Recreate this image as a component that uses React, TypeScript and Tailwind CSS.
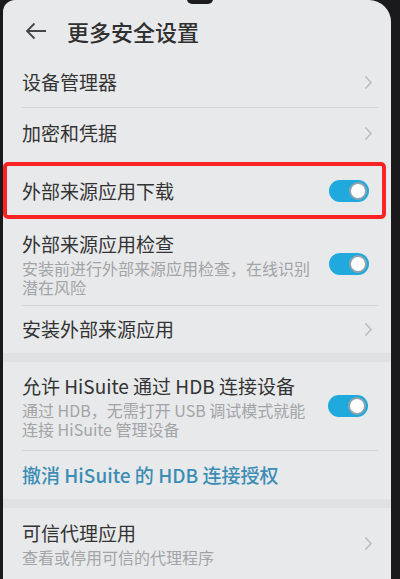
import { ReactNode } from "react";

const font = { fontFamily: '"Noto Sans CJK SC", "Noto Sans", sans-serif' };

function Chevron() {
    return (
        <svg width="9" height="15" viewBox="0 0 9 15" className="shrink-0">
            <path d="M1.5 1.5 L7 7.5 L1.5 13.5" fill="none" stroke="#b9bbbd" strokeWidth="1.5" />
        </svg>
    );
}

function Toggle() {
    return (
        <div className="flex h-[22px] w-[40px] shrink-0 items-center justify-end rounded-full bg-[#1fa9dd] pr-[2px]">
            <div className="h-[18px] w-[18px] rounded-full border-2 border-[#8fa3ad] bg-white" />
        </div>
    );
}

function Divider() {
    return <div className="ml-[19px] mr-[13px] h-px bg-[#d3d4d6]" />;
}

function Band() {
    return <div className="h-[9px] bg-[#e0e1e3]" />;
}

function Row({
    title,
    sub = [],
    right,
    className,
    titleClass = "text-[#333333]",
}: {
    title: string;
    sub?: string[];
    right?: ReactNode;
    className?: string;
    titleClass?: string;
}) {
    return (
        <div className={`flex items-center gap-3 pl-[19px] pr-[18px] ${className ?? ""}`}>
            <div className="flex min-w-0 flex-1 flex-col">
                <span className={`whitespace-nowrap text-[19px] leading-[26px] ${titleClass}`}>{title}</span>
                {sub.length > 0 && (
                    <div className="mt-[2px] flex flex-col">
                        {sub.map((line) => (
                            <span key={line} className="whitespace-nowrap text-[16px] leading-[19px] text-[#a3a4a6]">
                                {line}
                            </span>
                        ))}
                    </div>
                )}
            </div>
            {right}
        </div>
    );
}

export default function App() {
    return (
        <div className="flex h-[579px] w-[400px] overflow-hidden bg-[#1a1a1c]" style={font}>
            <div className="w-[3px] shrink-0" />
            <div className="relative flex flex-1 flex-col overflow-hidden rounded-tl-[12px] rounded-tr-[22px] bg-[#e8e9eb]">
                <div className="absolute left-[184px] top-[-6px] h-[10px] w-[26px] rounded-full bg-[#1b1b1d]" />

                <div className="flex h-[58px] items-center gap-[20px] pl-[22px] pt-[4px]">
                    <svg width="22" height="18" viewBox="0 0 22 18">
                        <path d="M21 9 H2 M9.5 1.5 L2 9 L9.5 16.5" fill="none" stroke="#454545" strokeWidth="1.8" />
                    </svg>
                    <span className="text-[22px] font-medium leading-none text-[#303030]">更多安全设置</span>
                </div>

                <Row title="设备管理器" right={<Chevron />} className="h-[50px]" />
                <Divider />
                <Row title="加密和凭据" right={<Chevron />} className="h-[51px]" />

                <div className="relative">
                    <Row title="外部来源应用下载" right={<Toggle />} className="h-[64px] pr-[22px]" />
                    <div className="absolute bottom-[4px] left-0 right-[5px] top-[3px] rounded-[5px] border-4 border-[#fb2323]" />
                </div>

                <Row
                    title="外部来源应用检查"
                    sub={["安装前进行外部来源应用检查，在线识别", "潜在风险"]}
                    right={<Toggle />}
                    className="h-[83px] pr-[22px]"
                />
                <Divider />
                <Row title="安装外部来源应用" right={<Chevron />} className="h-[47px]" />
                <Band />
                <Row
                    title="允许 HiSuite 通过 HDB 连接设备"
                    sub={["通过 HDB，无需打开 USB 调试模式就能", "连接 HiSuite 管理设备"]}
                    right={<Toggle />}
                    className="h-[89px] pr-[23px]"
                />
                <Divider />
                <Row
                    title="撤消 HiSuite 的 HDB 连接授权"
                    titleClass="text-[#3b8db5] font-medium"
                    className="h-[48px]"
                />
                <Band />
                <Row
                    title="可信代理应用"
                    sub={["查看或停用可信的代理程序"]}
                    right={<Chevron />}
                    className="h-[72px]"
                />
            </div>
            <div className="w-[9px] shrink-0" />
        </div>
    );
}
